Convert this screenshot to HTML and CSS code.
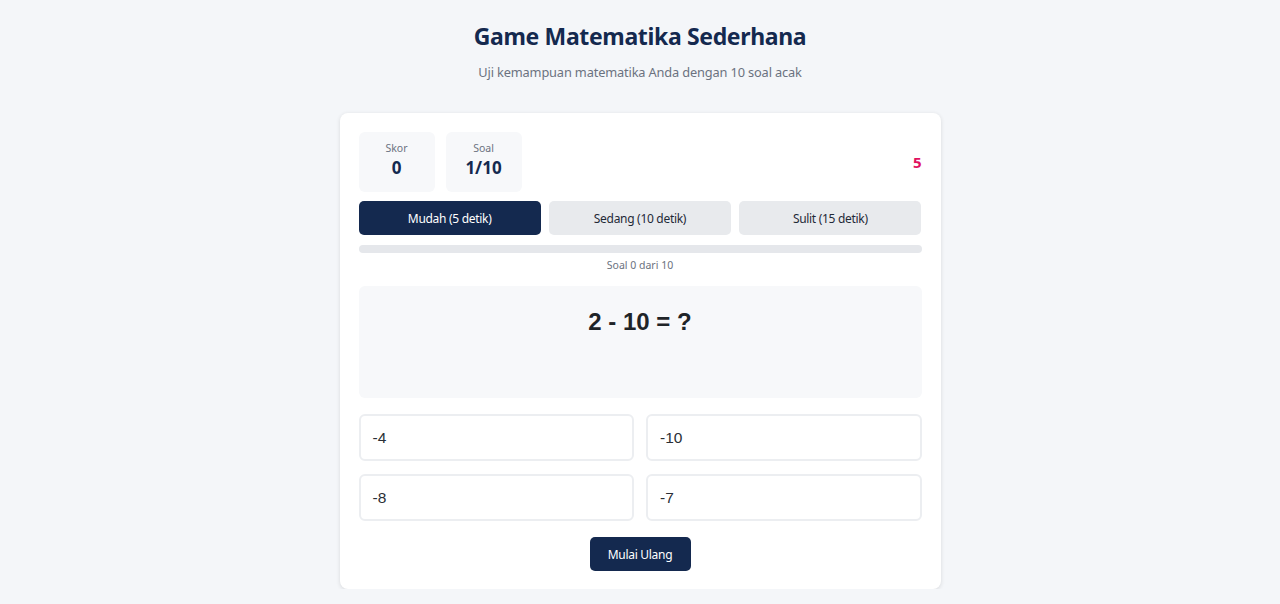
FILE: index.html
```html
<!DOCTYPE html>
<html lang="id">
<head>
<meta charset="utf-8">
<title>Game Matematika Sederhana</title>
<link rel="stylesheet" href="styles.css">
</head>
<body>
<header class="page-header">
  <h1 class="title">Game Matematika Sederhana</h1>
  <p class="subtitle">Uji kemampuan matematika Anda dengan 10 soal acak</p>
</header>
<main class="card">
  <div class="top-row">
    <div class="stats">
      <div class="stat">
        <div class="stat-label">Skor</div>
        <div class="stat-value">0</div>
      </div>
      <div class="stat">
        <div class="stat-label">Soal</div>
        <div class="stat-value">1/10</div>
      </div>
    </div>
    <div class="timer">5</div>
  </div>
  <div class="difficulty">
    <button class="diff-btn active">Mudah (5 detik)</button>
    <button class="diff-btn">Sedang (10 detik)</button>
    <button class="diff-btn">Sulit (15 detik)</button>
  </div>
  <div class="progress"><div class="progress-fill" style="width:0%"></div></div>
  <div class="progress-text">Soal 0 dari 10</div>
  <div class="question-box">
    <div class="question">2 - 10 = ?</div>
  </div>
  <div class="answers">
    <button class="answer">-4</button>
    <button class="answer">-10</button>
    <button class="answer">-8</button>
    <button class="answer">-7</button>
  </div>
  <div class="actions">
    <button class="restart">Mulai Ulang</button>
  </div>
</main>
</body>
</html>
```

FILE: styles.css
```css
* { box-sizing: border-box; }
body {
  margin: 0;
  background: #f4f6f9;
  font-family: "Noto Sans", "Open Sans", sans-serif;
  color: #1f2937;
  padding-top: 19px;
}
.page-header { text-align: center; }
.title {
  margin: 0;
  font-size: 23px;
  line-height: 34px;
  font-weight: 700;
  color: #14294f;
  letter-spacing: -0.35px;
}
.subtitle {
  margin: 9px 0 0;
  font-size: 12.8px;
  line-height: 20px;
  color: #6b7280;
  letter-spacing: -0.15px;
}
.card {
  width: 601px;
  margin: 31px auto 0;
  background: #fff;
  border-radius: 8px;
  padding: 19px 19px 18px;
  box-shadow: 0 1px 4px rgba(0,0,0,0.12);
}
.top-row {
  display: flex;
  align-items: center;
  justify-content: space-between;
}
.stats { display: flex; gap: 11px; }
.stat {
  width: 76px;
  height: 60px;
  background: #f7f8fa;
  border-radius: 6px;
  text-align: center;
  padding-top: 8px;
}
.stat-label {
  font-size: 10.5px;
  line-height: 16px;
  color: #6b7280;
}
.stat-value {
  font-size: 17px;
  line-height: 24px;
  font-weight: 700;
  color: #14294f;
}
.timer {
  font-size: 15px;
  font-weight: 700;
  color: #e0115f;
  padding-right: 0;
}
.difficulty {
  display: grid;
  grid-template-columns: repeat(3, 1fr);
  gap: 8px;
  margin-top: 9px;
}
.diff-btn {
  height: 34px;
  border: none;
  border-radius: 5px;
  background: #e8eaed;
  color: #1f2937;
  font-family: "Noto Sans", "Open Sans", sans-serif;
  font-size: 12px;
  letter-spacing: -0.3px;
  padding: 0;
}
.diff-btn.active { background: #14294f; color: #fff; }
.progress {
  margin-top: 10px;
  height: 8px;
  background: #e5e7eb;
  border-radius: 4px;
  overflow: hidden;
}
.progress-fill { height: 100%; background: #14294f; }
.progress-text {
  margin-top: 5px;
  text-align: center;
  font-size: 10.5px;
  line-height: 15px;
  color: #6b7280;
}
.question-box {
  margin-top: 13px;
  height: 112px;
  background: #f7f8fa;
  border-radius: 6px;
  padding-top: 22px;
  text-align: center;
}
.question {
  font-family: "Liberation Sans", Arial, sans-serif;
  font-size: 24px;
  line-height: 28px;
  font-weight: 700;
  color: #1f2428;
}
.answers {
  display: grid;
  grid-template-columns: 1fr 1fr;
  column-gap: 12px;
  row-gap: 13px;
  margin-top: 16px;
}
.answer {
  height: 47px;
  background: #fff;
  border: 2px solid #eceef1;
  border-radius: 6px;
  text-align: left;
  padding: 0 12px;
  font-family: "Liberation Sans", Arial, sans-serif;
  font-size: 15.5px;
  color: #2a2f36;
}
.actions {
  display: flex;
  justify-content: center;
  margin-top: 16px;
}
.restart {
  width: 101px;
  height: 34px;
  border: none;
  border-radius: 5px;
  background: #14294f;
  color: #fff;
  font-family: "Noto Sans", "Open Sans", sans-serif;
  font-size: 12px;
  letter-spacing: -0.3px;
  padding: 0;
}
```
